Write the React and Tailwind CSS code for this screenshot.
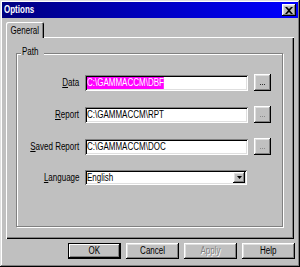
import React from "react";

const raised =
  "shadow-[inset_-1px_-1px_#000,inset_1px_1px_#fff,inset_-2px_-2px_#808080,inset_2px_2px_#dfdfdf]";
const sunken =
  "shadow-[inset_1px_1px_#808080,inset_-1px_-1px_#fff,inset_2px_2px_#000,inset_-2px_-2px_#dfdfdf]";

function T({ children, o = "origin-left", className = "" }) {
  return (
    <span className={`inline-block whitespace-nowrap scale-x-[0.8] ${o} ${className}`}>{children}</span>
  );
}

function Dots({ dim }) {
  const c = dim ? "bg-[#8a8a8a]" : "bg-[#303030]";
  return (
    <div className="flex gap-[1px] mt-[3px]">
      <div className={`w-[1px] h-[1px] ${c}`} />
      <div className={`w-[1px] h-[1px] ${c}`} />
      <div className={`w-[1px] h-[1px] ${c}`} />
    </div>
  );
}

function Field({ u, rest, value, highlight, dim }) {
  return (
    <div className="flex items-center h-[17px]">
      <div className="w-[62px] text-right leading-none">
        <T o="origin-right">
          <span className="underline">{u}</span>
          {rest}
        </T>
      </div>
      <div className={`ml-[6px] w-[163px] h-[16px] bg-white ${sunken} flex items-center px-[2px]`}>
        {highlight ? (
          <T className="bg-[#ff00ff] text-white leading-[12px]">{value}</T>
        ) : (
          <T className="leading-none">{value}</T>
        )}
      </div>
      <div className={`ml-[6px] w-[17px] h-[17px] bg-[#c0c0c0] ${raised} flex items-center justify-center`}>
        <Dots dim={dim} />
      </div>
    </div>
  );
}

function Btn({ children, def, disabled }) {
  return (
    <div
      className={`w-[53px] h-[16px] bg-[#c0c0c0] flex items-center justify-center leading-none ${
        def
          ? "shadow-[inset_0_0_0_1px_#000,inset_-2px_-2px_#000,inset_2px_2px_#fff,inset_-3px_-3px_#808080]"
          : raised
      } ${disabled ? "text-[#808080] [text-shadow:1px_1px_#fff]" : "text-black"}`}
    >
      <T o="origin-center">{children}</T>
    </div>
  );
}

export default function App() {
  return (
    <div className="w-[300px] h-[267px] bg-[#c0c0c0] p-[2px] flex flex-col text-[10px] text-black font-['Liberation_Sans',Arial,sans-serif] shadow-[inset_-1px_-1px_#000,inset_1px_1px_#dfdfdf,inset_-2px_-2px_#808080,inset_2px_2px_#fff]">
      {/* Title bar */}
      <div className="h-[16px] bg-[linear-gradient(to_right,#000080,#0000ff)] flex items-center justify-between pl-[2px] pr-[2px]">
        <T className="text-white font-bold leading-none">Options</T>
        <div className={`w-[14px] h-[12px] bg-[#c0c0c0] ${raised} flex items-center justify-center`}>
          <svg width="8" height="7" viewBox="0 0 8 7">
            <path d="M0 0h2l2 2 2-2h2L5 3.5 8 7H6L4 5 2 7H0l3-3.5z" fill="#000" />
          </svg>
        </div>
      </div>

      {/* Tabs */}
      <div className="mt-[4px] pl-[4px] h-[16px] flex relative z-10">
        <div className="w-[38px] h-[16px] bg-[#c0c0c0] rounded-t-[2px] shadow-[inset_1px_1px_#fff,inset_-1px_0_#000,inset_-2px_0_#808080] flex items-center justify-center leading-none pt-[1px]">
          <T o="origin-center">General</T>
        </div>
      </div>

      {/* Panel */}
      <div className="-mt-[1px] ml-[4px] w-[288px] h-[202px] bg-[#c0c0c0] shadow-[inset_1px_1px_#fff,inset_-1px_-1px_#000,inset_-2px_-2px_#808080] pl-[10px] pt-[16px]">
        <div className="relative w-[267px] h-[174px] border border-[#808080] shadow-[1px_1px_#fff,inset_1px_1px_#fff]">
          <span className="absolute -top-[7px] left-[4px] bg-[#c0c0c0] px-[1px] leading-none">
            <T>Path</T>
          </span>
          <div className="flex flex-col gap-[15px] pt-[20px]">
            <Field u="D" rest="ata" value="C:\GAMMACCM\DBF" highlight />
            <Field u="R" rest="eport" value="C:\GAMMACCM\RPT" dim />
            <Field u="S" rest="aved Report" value="C:\GAMMACCM\DOC" dim />
            <div className="flex items-center h-[15px]">
              <div className="w-[62px] text-right leading-none">
                <T o="origin-right">
                  <span className="underline">L</span>anguage
                </T>
              </div>
              <div className={`ml-[6px] w-[162px] h-[15px] bg-white ${sunken} flex items-center justify-between pl-[2px] pr-[2px]`}>
                <T className="leading-none">English</T>
                <div className={`w-[12px] h-[11px] bg-[#c0c0c0] ${raised} flex items-center justify-center`}>
                  <svg width="5" height="3" viewBox="0 0 5 3">
                    <path d="M0 0h5L2.5 3z" fill="#000" />
                  </svg>
                </div>
              </div>
            </div>
          </div>
        </div>
      </div>

      {/* Buttons */}
      <div className="mt-[4px] flex justify-end gap-[5px] pr-[3px]">
        <Btn def>OK</Btn>
        <Btn>Cancel</Btn>
        <Btn disabled>Apply</Btn>
        <Btn>Help</Btn>
      </div>
    </div>
  );
}
